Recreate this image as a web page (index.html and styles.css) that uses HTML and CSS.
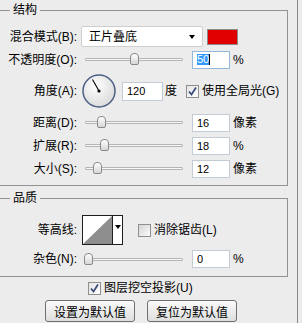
FILE: index.html
```html
<!DOCTYPE html>
<html lang="zh">
<head>
  <meta charset="UTF-8">
  <title>投影</title>
  <link rel="stylesheet" href="styles.css">
</head>
<body>
  <div class="panel">
    <!-- 结构 -->
    <fieldset class="group group-structure">
      <legend>结构</legend>

      <div class="row">
        <label class="lbl">混合模式(B):</label>
        <div class="select"><span>正片叠底</span><i class="caret"></i></div>
        <div class="swatch"></div>
      </div>

      <div class="row">
        <label class="lbl">不透明度(O):</label>
        <div class="slider"><div class="track"></div><div class="thumb" style="left:45px"></div></div>
        <div class="num focus"><span class="sel">50</span><i class="cursor"></i></div>
        <span class="unit">%</span>
      </div>

      <div class="row row-angle">
        <label class="lbl">角度(A):</label>
        <svg class="dial" width="34" height="34" viewBox="0 0 34 34">
          <defs>
            <radialGradient id="dialFill" cx="40%" cy="35%" r="70%">
              <stop offset="0" stop-color="#ffffff"/>
              <stop offset="1" stop-color="#d9d9d9"/>
            </radialGradient>
          </defs>
          <circle cx="17" cy="17" r="16" fill="url(#dialFill)" stroke="#4d5f86" stroke-width="1.5"/>
          <line x1="17" y1="17" x2="10.5" y2="5.5" stroke="#000" stroke-width="1.1"/>
          <circle cx="17" cy="17" r="1.6" fill="#000"/>
        </svg>
        <div class="num num-angle">120</div>
        <span class="unit">度</span>
        <span class="check on global">
          <svg width="11" height="11" viewBox="0 0 11 11"><path d="M2 5.5 L4.5 8.5 L9 1.5" fill="none" stroke="#3b4f7a" stroke-width="1.8"/></svg>
        </span>
        <span class="check-text">使用全局光(G)</span>
      </div>

      <div class="row">
        <label class="lbl">距离(D):</label>
        <div class="slider"><div class="track"></div><div class="thumb" style="left:12px"></div></div>
        <div class="num">16</div>
        <span class="unit">像素</span>
      </div>

      <div class="row">
        <label class="lbl">扩展(R):</label>
        <div class="slider"><div class="track"></div><div class="thumb" style="left:15px"></div></div>
        <div class="num">18</div>
        <span class="unit">%</span>
      </div>

      <div class="row">
        <label class="lbl">大小(S):</label>
        <div class="slider"><div class="track"></div><div class="thumb" style="left:8px"></div></div>
        <div class="num">12</div>
        <span class="unit">像素</span>
      </div>
    </fieldset>

    <!-- 品质 -->
    <fieldset class="group group-quality">
      <legend>品质</legend>

      <div class="row row-contour">
        <label class="lbl">等高线:</label>
        <div class="contour">
          <svg class="curve" width="29" height="28" viewBox="0 0 29 28">
            <polygon points="0,28 29,0 29,28" fill="#8e8e8e"/>
          </svg>
          <div class="contour-drop"><i class="caret"></i></div>
        </div>
        <span class="check anti"></span>
        <span class="check-text">消除锯齿(L)</span>
      </div>

      <div class="row row-noise">
        <label class="lbl">杂色(N):</label>
        <div class="slider"><div class="track"></div><div class="thumb" style="left:-1px"></div></div>
        <div class="num">0</div>
        <span class="unit">%</span>
      </div>
    </fieldset>

    <div class="knockout">
      <span class="check on">
        <svg width="11" height="11" viewBox="0 0 11 11"><path d="M2 5.5 L4.5 8.5 L9 1.5" fill="none" stroke="#3b4f7a" stroke-width="1.8"/></svg>
      </span>
      <span class="check-text">图层挖空投影(U)</span>
    </div>

    <div class="buttons">
      <button class="btn">设置为默认值</button>
      <button class="btn">复位为默认值</button>
    </div>
  </div>
</body>
</html>
```

FILE: styles.css
```css
body {
  margin: 0;
  background: #ececec;
  font-family: "Liberation Sans", "Noto Sans CJK SC", sans-serif;
  font-size: 12px;
  line-height: 16px;
  color: #000;
}

.panel {
  width: 297px;
  height: 323px;
  border-right: 1px solid #8a8a8a;
  overflow: hidden;
}

/* 分组框 */
.group {
  box-sizing: border-box;
  width: 288px;
  min-width: 0;
  margin: 2px 0 0 0;
  padding: 7px 0 5px 0;
  border: 1px solid #929292;
  border-left: none;
}

.group legend {
  margin-left: 10px;
  padding: 0 3px;
  font-size: 12px;
  line-height: 16px;
}

.group-quality {
  margin-top: 4px;
  padding: 6px 0 6px 0;
}

.row {
  display: flex;
  align-items: center;
  height: 23px;
}

.row-angle { height: 40px; }
.row-contour { height: 36px; }
.row-noise { height: 22px; }

.lbl {
  flex: 0 0 77px;
  display: flex;
  justify-content: flex-end;
  white-space: nowrap;
}

/* 下拉框 */
.select {
  box-sizing: border-box;
  width: 122px;
  height: 21px;
  margin-left: 4px;
  padding: 0 7px;
  display: flex;
  align-items: center;
  justify-content: space-between;
  background: #fff;
  border: 1px solid #cfcfcf;
  border-radius: 2px;
}

.caret {
  width: 0;
  height: 0;
  border-left: 3px solid transparent;
  border-right: 3px solid transparent;
  border-top: 4px solid #000;
}

.swatch {
  box-sizing: border-box;
  width: 31px;
  height: 16px;
  margin-left: 4px;
  background: #e00000;
  border: 1px solid #8c8c8c;
}

/* 滑块 */
.slider {
  position: relative;
  width: 98px;
  height: 13px;
  margin-left: 8px;
}

.track {
  position: absolute;
  left: 0;
  right: 0;
  top: 5px;
  height: 1px;
  background: #f8f8f8;
  border: 1px solid #b4b4b4;
  border-radius: 1px;
}

.thumb {
  position: absolute;
  top: 0;
  box-sizing: border-box;
  width: 9px;
  height: 12px;
  background: linear-gradient(#ffffff, #d6d6d6);
  border: 1px solid #8a8a8a;
  border-radius: 4px 4px 2px 2px;
}

/* 数值框 */
.num {
  box-sizing: border-box;
  width: 38px;
  height: 18px;
  margin-left: 9px;
  padding-left: 4px;
  display: flex;
  align-items: center;
  background: #fff;
  border: 1px solid #c3ccd6;
  font-size: 11px;
}

.num.focus { border-color: #94b8dc; }

.num .sel {
  background: #3399ff;
  color: #fff;
  line-height: 11px;
}

.num .cursor {
  width: 1px;
  height: 11px;
  background: #000;
}

.num-angle {
  width: 41px;
  height: 19px;
  margin-left: 6px;
}

.unit { margin-left: 3px; }

.row-angle .unit { margin-left: 2px; }

.dial { margin-left: 5px; }

/* 复选框 */
.check {
  box-sizing: border-box;
  width: 13px;
  height: 13px;
  display: flex;
  align-items: center;
  justify-content: center;
  border: 1px solid #8f8f8f;
  background: linear-gradient(135deg, #d4d4d4, #fbfbfb);
}

.check.on { background: linear-gradient(135deg, #e4e4e4, #ffffff); }

.check.global { margin-left: 9px; }
.check.anti { margin-left: 15px; }

.check-text {
  margin-left: 3px;
  white-space: nowrap;
}

/* 等高线 */
.contour {
  box-sizing: border-box;
  width: 41px;
  height: 30px;
  margin-left: 5px;
  display: flex;
  background: #fff;
  border: 1px solid #1e1e1e;
}

.contour-drop {
  flex: 1;
  display: flex;
  justify-content: center;
  padding-top: 9px;
  border-left: 1px solid #1e1e1e;
}

.knockout {
  display: flex;
  align-items: center;
  height: 22px;
  padding-left: 88px;
}

.buttons {
  display: flex;
  gap: 12px;
  margin-top: 1px;
  padding-left: 45px;
}

.btn {
  width: 90px;
  height: 22px;
  padding: 0;
  font-family: inherit;
  font-size: 12px;
  color: #000;
  background: linear-gradient(#fafafa, #dedede);
  border: 1px solid #707070;
  border-radius: 3px;
}
```
